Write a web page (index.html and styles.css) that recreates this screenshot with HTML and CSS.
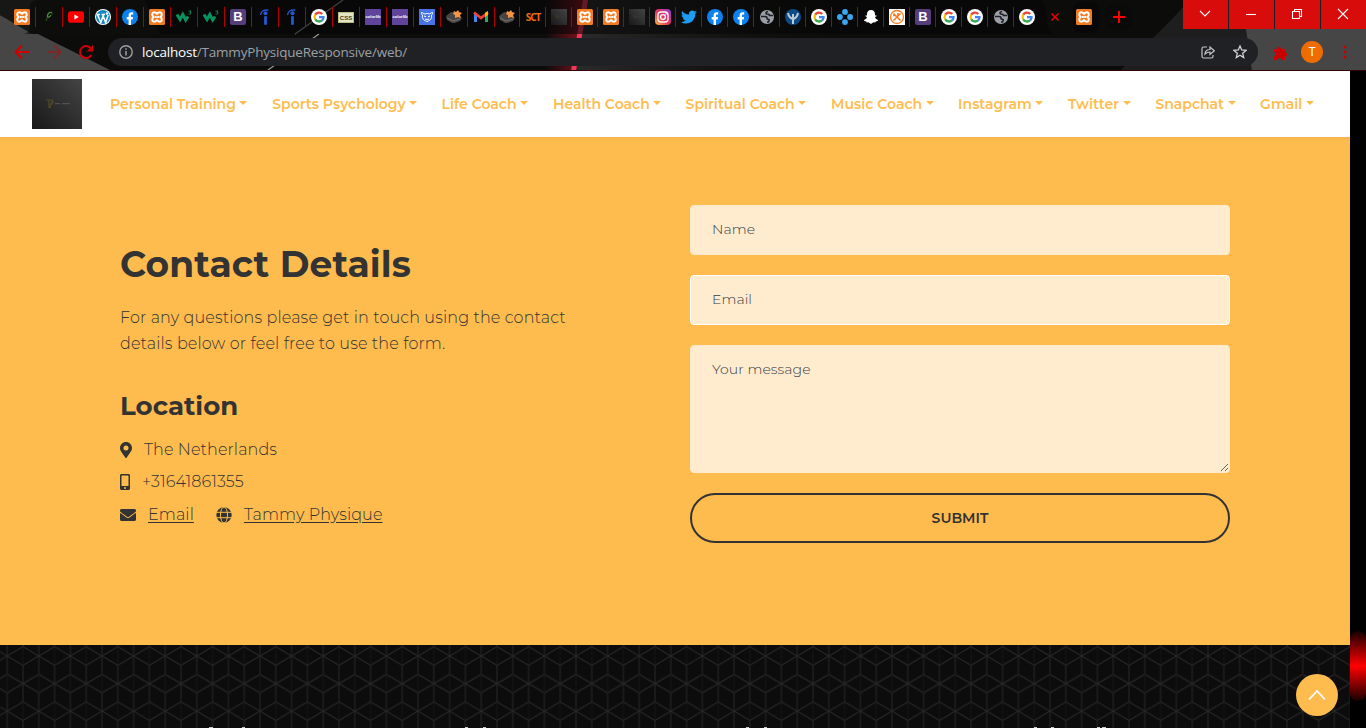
FILE: index.html
```html
<!DOCTYPE html>
<html lang="en">
<head>
<meta charset="utf-8">
<title>Tammy Physique</title>
<link rel="stylesheet" href="styles.css">
</head>
<body>
<svg class="defs" width="0" height="0">
  <symbol id="xampp" viewBox="0 0 16 16"><rect width="16" height="16" rx="1.5" fill="#f37b22"/><path d="M5 3.300C3 3.300 2.500 6.300 4.500 8 2.500 9.700 3 12.700 5 12.700q1.500 0 3-1.500 1.500 1.500 3 1.500c2 0 2.500-3 .5-4.700 2-1.700 1.500-4.700-.5-4.700q-1.500 0-3 1.500-1.500-1.500-3-1.500z" fill="none" stroke="#fff" stroke-width="2"/><path d="M6.500 7v2M9.500 7v2M6.500 8h3" stroke="#fff" stroke-width="1.300"/></symbol>
  <symbol id="leaf" viewBox="0 0 16 16"><path d="M11 3.500C8 3 6 5 6.500 8c1 .5 2.500 0 3.500-2" fill="none" stroke="#4a8f35" stroke-width="1.300"/><path d="M6.500 8L5 12M11 3.500v2" fill="none" stroke="#2c5a22"/></symbol>
  <symbol id="youtube" viewBox="0 0 16 16"><rect y="2.300" width="16" height="11.400" rx="2.800" fill="#f00"/><path d="M6.400 5.500v5L10.700 8z" fill="#fff"/></symbol>
  <symbol id="wordpress" viewBox="0 0 16 16"><circle cx="8" cy="8" r="8" fill="#fff"/><circle cx="8" cy="8" r="7" fill="#1688be"/><path d="M2.500 5.500l3.300 8 2.300-6.500 2.600 6.500 2.500-7.500M2 5.500h3M6.500 5.500h3.500" fill="none" stroke="#fff" stroke-width="1.500"/><circle cx="12" cy="4.500" r="1.200" fill="#fff"/></symbol>
  <symbol id="facebook" viewBox="0 0 16 16"><circle cx="8" cy="8" r="8" fill="#0c82f0"/><path d="M6.600 16v-5.500H4.700V8h1.900V6.400c0-2.100 1.200-3.200 3-3.200l1.600.1v2.100h-1c-1 0-1.200.5-1.200 1.200V8h2.100l-.4 2.500H9V16z" fill="#fff"/></symbol>
  <symbol id="w3" viewBox="0 0 16 16"><path d="M1 5.500l3 5 2.800-5L9.700 11l2.300-3.500" fill="none" stroke="#07925e" stroke-width="3"/><path d="M12.500 2H15l-1 1.300q1.500.2.700 1.500-1.200.7-2.200 0" fill="none" stroke="#07925e" stroke-width=".9"/></symbol>
  <symbol id="indeed" viewBox="0 0 16 16"><circle cx="8.500" cy="4.200" r="2" fill="#2557d6"/><rect x="7.100" y="7" width="2.800" height="9" rx="1.200" fill="#2557d6"/><path d="M3.500 6Q4.500 0 11.500 1.200" fill="none" stroke="#2557d6" stroke-width="1.300"/></symbol>
  <symbol id="google" viewBox="0 0 16 16"><circle cx="8" cy="8" r="8" fill="#fff"/><g fill="none" stroke-width="2.300"><path d="M4.200 5.700A4.400 4.400 0 0 1 11.200 5" stroke="#ea4335"/><path d="M4.200 10.200a4.500 4.500 0 0 1 0-4.500" stroke="#fbbc05"/><path d="M4.200 10.200a4.400 4.400 0 0 0 6.800 1.200" stroke="#34a853"/><path d="M8 8.200h4.500q0 2-1.500 3.200" stroke="#4285f4"/></g></symbol>
  <symbol id="bear" viewBox="0 0 16 16"><rect width="16" height="16" fill="#4773e4"/><path d="M2.500 3.500q2 0 2.500 1.500 3-1 6 0 .5-1.500 2.500-1.500.3 2-1 2.500 1 5-4.500 6.500Q2.500 11 3.500 6q-1.200-.5-1-2.500z" fill="none" stroke="#fff" stroke-width=".9"/><path d="M5 7l2 .8M11 7l-2 .8M6 10q2 1 4 0" fill="none" stroke="#fff"/></symbol>
  <symbol id="plugin" viewBox="0 0 16 16"><path d="M0 7l5-4 5 1 6 5-2 3-5 2H6l-5-3z" fill="#474543"/><path d="M1 9l6 3 7-2" fill="none" stroke="#77736c"/><path d="M8 2l2 1 2-2 1 2 3 1-2 2 1 3-3-1-3 1V6L7 5z" fill="#f79444"/></symbol>
  <symbol id="gmail" viewBox="0 0 16 16"><path d="M1 4v9h3V7z" fill="#4285f4"/><path d="M15 4v9h-3V7z" fill="#34a853"/><path d="M1 3.500L8 9l7-5.500" fill="none" stroke="#ea4335" stroke-width="2.700"/><path d="M12 3.700L15 2v4l-3 2z" fill="#fbbc04"/></symbol>
  <symbol id="logo" viewBox="0 0 50 50"><rect width="50" height="50" fill="url(#logo-shade)"/><path d="M14 21h7M17 21v8M18 29q1-7 3-7 1 3-3 4" fill="none" stroke="#504d24" stroke-width="1.100"/><path d="M23 24.700h5M30 24.700h8" stroke="#505050" stroke-width="1.200"/></symbol>
  <symbol id="instagram" viewBox="0 0 16 16"><rect width="16" height="16" rx="4" fill="url(#insta-shade)"/><rect x="3" y="3" width="10" height="10" rx="3" fill="none" stroke="#fff" stroke-width="1.300"/><circle cx="8" cy="8" r="2.400" fill="none" stroke="#fff" stroke-width="1.300"/><circle cx="11" cy="5" r=".7" fill="#fff"/></symbol>
  <symbol id="twitter" viewBox="0 0 16 16"><path d="M5 14.500c6 0 9.300-5 9.300-9.300v-.4L16 3l-1.900.5 1.400-1.800-2 .8A3.300 3.300 0 0 0 7.900 5.500C5 5.400 2.700 4 1.100 2c-.9 1.500-.4 3.400 1 4.400L.6 6c0 1.600 1.100 2.900 2.600 3.200l-1.400.1c.4 1.300 1.600 2.200 3 2.300A6.600 6.600 0 0 1 0 13c1.500 1 3.200 1.500 5 1.500z" fill="#1d9bf0"/></symbol>
  <symbol id="globe" viewBox="0 0 16 16"><circle cx="8" cy="8" r="7" fill="#9aa0a6"/><path d="M2 7.500h4q2 0 2 1.500t1.500 1.200Q11 10.500 9.500 13H8M9 2.500Q6 3 7.500 5q3 0 3 1.500H14" fill="none" stroke="#202124" stroke-width="1.600"/></symbol>
  <symbol id="psi" viewBox="0 0 16 16"><circle cx="8" cy="8" r="8" fill="#0d4a86"/><path d="M3 4q1 5 5 6 4-1 5-6M8 5v10" fill="none" stroke="#b9c9d7" stroke-width="2"/></symbol>
  <symbol id="dots" viewBox="0 0 16 16"><g fill="#37a8f4"><circle cx="8" cy="2.900" r="2.900"/><circle cx="2.900" cy="8" r="2.900"/><circle cx="13.100" cy="8" r="2.900"/><circle cx="8" cy="13.100" r="2.900"/></g></symbol>
  <symbol id="snapchat" viewBox="0 0 16 16"><path d="M8 1C5.300 1 4 2.800 4 5v1.500l-1.300-.2-.3 1 1.600.8c-.5 1.700-1.800 2.600-3 3l.3.900 2 .5.300 1 2-.2L8 15l2.400-1.700 2 .2.300-1 2-.5.300-.9c-1.200-.4-2.500-1.300-3-3l1.600-.8-.3-1-1.300.2V5c0-2.200-1.300-4-4-4z" fill="#fff"/></symbol>
  <symbol id="tools" viewBox="0 0 16 16"><rect width="16" height="16" fill="#fff"/><circle cx="8" cy="8" r="6.500" fill="none" stroke="#f37b22" stroke-width="1.300"/><path d="M4.500 4.500l7 7M11.500 4.500l-7 7M4 6.500h3M9 4v3" fill="none" stroke="#f37b22" stroke-width="1.700"/></symbol>
  <linearGradient id="logo-shade" x1="0" y1="1" x2="1" y2="0"><stop stop-color="#181818"/><stop offset="1" stop-color="#444"/></linearGradient>
  <linearGradient id="insta-shade" x1="0" y1="1" x2="1" y2="0"><stop stop-color="#fdb743"/><stop offset=".45" stop-color="#ee3556"/><stop offset="1" stop-color="#8b3dd0"/></linearGradient>
</svg>

<header class="browser">
  <svg class="theme" viewBox="0 0 1366 71" aria-hidden="true">
    <defs><linearGradient id="beam"><stop stop-color="#80101c" stop-opacity="0"/><stop offset="1" stop-color="#9e1020"/></linearGradient>
    <linearGradient id="haze"><stop stop-color="#333" stop-opacity=".8"/><stop offset="1" stop-color="#111" stop-opacity="0"/></linearGradient></defs>
    <rect width="1366" height="71" fill="#0c0c0b"/>
    <path d="M586 0h260v71H576z" fill="url(#haze)"/>
    <path d="M545 0h43l-12 71h-31z" fill="url(#beam)"/>
    <path d="M583 0h5l-12 71h-5z" fill="#ee3858"/>
    <path d="M0 15l110 55H0z" fill="#464646"/>
    <path d="M0 0h145l15 34H32L0 15z" fill="#171716"/>
    <path d="M343 0L295 34M319 34L268 70" stroke="#999" stroke-width="1.200"/>
    <path d="M1120 71l50-50L1190 0h176v71z" fill="#1e1e1e"/>
    <path d="M1246 29h120v42h-114z" fill="#464646"/>
    <path d="M30 5q2-5 8-5h1000q6 0 7 8l3 18q1 8 8 8H23q7 0 7-8z" fill="#060606" fill-opacity=".6"/>
    <rect x="1073" y="2" width="26" height="31" rx="8" fill="#080808"/>
  </svg>
  <div class="tabbar">
    <div class="tabs wide">
      <span class="tab"><svg><use href="#xampp"/></svg></span><span class="tab"><svg><use href="#leaf"/></svg></span><span class="tab"><svg><use href="#youtube"/></svg></span><span class="tab"><svg><use href="#wordpress"/></svg></span><span class="tab"><svg><use href="#facebook"/></svg></span><span class="tab"><svg><use href="#xampp"/></svg></span><span class="tab"><svg><use href="#w3"/></svg></span><span class="tab"><svg><use href="#w3"/></svg></span><span class="tab"><i class="fav bootstrap">B</i></span><span class="tab"><svg><use href="#indeed"/></svg></span><span class="tab"><svg><use href="#indeed"/></svg></span><span class="tab"><svg><use href="#google"/></svg></span><span class="tab"><i class="fav css">CSS</i></span><span class="tab"><i class="fav colorlib">colorlib</i></span><span class="tab"><i class="fav colorlib">colorlib</i></span><span class="tab"><svg><use href="#bear"/></svg></span><span class="tab"><svg><use href="#plugin"/></svg></span><span class="tab"><svg><use href="#gmail"/></svg></span>
    </div>
    <div class="tabs">
      <span class="tab"><svg><use href="#plugin"/></svg></span><span class="tab"><i class="fav sct">SCT</i></span><span class="tab"><svg><use href="#logo"/></svg></span><span class="tab"><svg><use href="#xampp"/></svg></span><span class="tab"><svg><use href="#xampp"/></svg></span><span class="tab"><svg><use href="#logo"/></svg></span><span class="tab"><svg><use href="#instagram"/></svg></span><span class="tab"><svg><use href="#twitter"/></svg></span><span class="tab"><svg><use href="#facebook"/></svg></span><span class="tab"><svg><use href="#facebook"/></svg></span><span class="tab"><svg><use href="#globe"/></svg></span><span class="tab"><svg><use href="#psi"/></svg></span><span class="tab"><svg><use href="#google"/></svg></span><span class="tab"><svg><use href="#dots"/></svg></span><span class="tab"><svg><use href="#snapchat"/></svg></span><span class="tab"><svg><use href="#tools"/></svg></span><span class="tab"><i class="fav bootstrap">B</i></span><span class="tab"><svg><use href="#google"/></svg></span><span class="tab"><svg><use href="#google"/></svg></span><span class="tab"><svg><use href="#globe"/></svg></span><span class="tab last"><svg><use href="#google"/></svg></span>
    </div>
    <svg class="tab-close" viewBox="0 0 8 8"><path d="M.5.5l7 7M7.500.5l-7 7" stroke="#f00000" stroke-width="1.500"/></svg>
    <svg class="favicon-end"><use href="#xampp"/></svg>
    <span class="new-tab"><svg width="12" height="12" viewBox="0 0 12 12"><path d="M6 0v12M0 6h12" stroke="#f00" stroke-width="2"/></svg></span>
    <div class="window-buttons">
      <span><svg width="12" height="12" viewBox="0 0 12 12"><path d="M1 3l5 5 5-5"/></svg></span>
      <span><svg width="12" height="12" viewBox="0 0 12 12"><path d="M1 6.500h10"/></svg></span>
      <span><svg width="12" height="12" viewBox="0 0 12 12"><path d="M1.500 3.500h7v7h-7zM3.500 3.500v-2h7v7h-2"/></svg></span>
      <span><svg width="12" height="12" viewBox="0 0 12 12"><path d="M1 1l10 10M11 1L1 11"/></svg></span>
    </div>
  </div>
  <div class="toolbar">
    <svg width="16" height="16" viewBox="0 0 16 16" class="tool"><path d="M15 8H2M8 1.500L1.500 8 8 14.500"/></svg>
    <svg width="16" height="16" viewBox="0 0 16 16" class="tool dim"><path d="M1 8h13M8 1.500L14.500 8 8 14.500"/></svg>
    <svg width="16" height="16" viewBox="0 0 16 16" class="tool"><path d="M13.300 11A6 6 0 1 1 12.500 4L14 6"/><path d="M15 1v6.500H8.500z" class="solid"/></svg>
    <div class="address">
      <svg width="14" height="14" viewBox="0 0 14 14"><circle cx="7" cy="7" r="6.200" fill="none" stroke="#9aa0a6" stroke-width="1.400"/><path d="M7 6v4.500M7 3.300v1.500" stroke="#9aa0a6" stroke-width="1.500"/></svg>
      <span class="url"><b>localhost</b>/TammyPhysiqueResponsive/web/</span>
      <svg class="share" width="14" height="14" viewBox="0 0 14 14"><path d="M6 2H2.500Q1 2 1 3.500v8Q1 13 2.500 13h8q1.500 0 1.500-1.500V10M4 9q.5-4.500 5-4.500V2L13.300 5.800 9 9.500V7Q6 7 4 9z" fill="none" stroke="#c3c5c8" stroke-width="1.200"/></svg>
      <svg width="14" height="14" viewBox="0 0 14 14"><path d="M7 1l1.700 4 4.300.4-3.300 2.900 1 4.300L7 10.300l-3.700 2.300 1-4.300L1 5.400 5.300 5z" fill="none" stroke="#d0d2d5" stroke-width="1.300"/></svg>
    </div>
    <svg class="puzzle" width="15" height="15" viewBox="0 0 15 15"><path d="M1 4h3a2 2 0 1 1 4 0h4v3.500a2 2 0 1 1 0 4V15H8.500a2 2 0 0 0-4 0H1v-4a2 2 0 0 0 0-4z" fill="#c90000"/></svg>
    <span class="avatar">T</span>
    <svg class="menu" width="4" height="14" viewBox="0 0 4 14" fill="#c90000"><circle cx="2" cy="2" r="1.500"/><circle cx="2" cy="7" r="1.500"/><circle cx="2" cy="12" r="1.500"/></svg>
  </div>
</header>

<div class="viewport">
  <div class="page">
    <nav class="site-nav">
      <svg class="brand"><use href="#logo"/></svg>
      <div class="links">
        <a>Personal Training</a><a>Sports Psychology</a><a>Life Coach</a><a>Health Coach</a><a>Spiritual Coach</a><a>Music Coach</a><a>Instagram</a><a>Twitter</a><a>Snapchat</a><a>Gmail</a>
      </div>
    </nav>
    <main class="contact">
      <section class="details">
        <h1>Contact Details</h1>
        <p class="intro">For any questions please get in touch using the contact<br>details below or feel free to use the form.</p>
        <h2>Location</h2>
        <p class="row"><svg width="12" height="16" viewBox="0 0 384 512"><path d="M172.300 501.700C27 291 0 269.400 0 192 0 86 86 0 192 0s192 86 192 192c0 77.400-27 99-172.300 309.700a24 24 0 0 1-39.400 0zM192 272a80 80 0 1 0 0-160 80 80 0 0 0 0 160z"/></svg><span>The Netherlands</span></p>
        <p class="row"><svg width="10" height="16" viewBox="0 0 320 512"><path fill-rule="evenodd" d="M272 0H48C21.500 0 0 21.500 0 48v416c0 26.500 21.500 48 48 48h224c26.500 0 48-21.500 48-48V48c0-26.500-21.500-48-48-48zM160 480a32 32 0 1 1 0-64 32 32 0 0 1 0 64zm112-108q0 12-12 12H60q-12 0-12-12V60q0-12 12-12h200q12 0 12 12z"/></svg><span>+31641861355</span></p>
        <p class="row"><svg width="16" height="16" viewBox="0 0 512 512"><path d="M502 191c4-3 10 0 10 5v204c0 26-22 48-48 48H48c-26 0-48-22-48-48V196c0-5 6-8 10-5 22 17 52 40 155 114 21 16 57 48 91 48s71-33 91-48c103-74 133-97 155-114zM256 320c23 0 57-29 74-42 132-96 143-104 174-129 5-4 8-11 8-18v-19c0-26-22-48-48-48H48c-26 0-48 22-48 48v19c0 7 3 14 8 18 31 25 42 33 174 129 17 13 51 42 74 42z"/></svg><a>Email</a>
        <svg class="web" width="16" height="16" viewBox="0 0 16 16"><circle cx="8" cy="8" r="7.700"/><path d="M0 5.300h16M0 10.700h16" stroke="#ffbc4e" fill="none"/><ellipse cx="8" cy="8" rx="3.500" ry="8" stroke="#ffbc4e" fill="none"/></svg><a>Tammy Physique</a></p>
      </section>
      <form class="form">
        <input class="field" placeholder="Name" aria-label="Name">
        <input class="field hovered" placeholder="Email" aria-label="Email">
        <textarea class="field message" placeholder="Your message" aria-label="Your message"></textarea>
        <button type="button">SUBMIT</button>
      </form>
    </main>
    <footer class="footer">
      <svg width="1350" height="83"><defs><pattern id="cubes" x="7.200" y="11" width="31.600" height="55.200" patternUnits="userSpaceOnUse"><g fill="none" stroke="#2b2b2b" stroke-width="1"><path d="M0 0l15.800-9.200L31.600 0 15.800 9.200zM0 55.200L15.800 46l15.800 9.200-15.800 9.200zM-15.800 27.600L0 18.400l15.800 9.200L0 36.800zM15.800 27.600l15.800-9.200 15.800 9.200-15.800 9.200z"/><path d="M15.800 9.200V46M0 0v18.400M0 36.800v18.400M31.600 0v18.400M31.600 36.800v18.400" stroke="#262626"/><path d="M0 18v19M31.600 18v19M15.800 0v9M15.800 46v9" stroke="#151515"/></g></pattern></defs><rect width="1350" height="83" fill="#0c0c0c"/><rect width="1350" height="83" fill="url(#cubes)"/></svg>
      <svg class="ascenders" width="1350" height="1" fill="#c9c9c9"><path d="M209 0h4v1h-4zM242 0h3v1h-3zM465 0h3v1h-3zM483 0h3v1h-3zM746 0h3v1h-3zM764 0h3v1h-3zM1034 0h3v1h-3zM1051 0h3v1h-3zM1097 0h3v1h-3zM1102 0h4v1h-4z"/></svg>
    </footer>
  </div>
  <div class="scrollbar"><span class="thumb"></span></div>
  <a class="to-top"><svg width="18" height="12" viewBox="0 0 18 12"><path d="M1 10.500l8-8.500 8 8.500" fill="none" stroke="#fff" stroke-width="1.800"/></svg></a>
</div>
</body>
</html>
```

FILE: styles.css
```css
* { box-sizing: border-box; }
body { margin: 0; width: 1366px; height: 728px; overflow: hidden; background: #000; font-family: Montserrat, Inter, "Liberation Sans", sans-serif; color: #333; }
.defs { position: absolute; }
svg { flex: none; }

.browser { position: relative; height: 71px; border-bottom: 1px solid #300006; overflow: hidden; }
.theme { position: absolute; inset: 0; width: 1366px; height: 71px; }
.tabbar { position: relative; display: flex; height: 34px; padding-left: 9px; align-items: center; }
.tabs { display: flex; height: 34px; }
.tabs + .tabs { margin-left: -1px; }
.tab { width: 26px; height: 34px; padding: 9px 5px 0; background: linear-gradient(#b00000, #b00000) 100% 7px / 1px 20px no-repeat; }
.wide .tab { width: 27px; }
.tab.last { background: none; }
.tab svg, .favicon-end { display: block; width: 16px; height: 16px; }
.fav { display: flex; align-items: center; justify-content: center; width: 16px; height: 16px; font: 700 13px/16px "Liberation Sans", sans-serif; color: #fff; }
.fav.bootstrap { border-radius: 2px; background: #563d7c; }
.fav.css { height: 11px; margin-top: 3px; border: 1px solid #b9bd83; background: #e3e4c3; font-size: 6px; color: #3d402b; }
.fav.colorlib { background: #60439a; font-size: 4.200px; }
.fav.sct { font: 700 10px/16px "Open Sans", sans-serif; letter-spacing: -1px; color: #f46b0b; }
.tab-close { width: 8px; height: 8px; margin-left: 11px; }
.favicon-end { margin-left: 17px; }
.new-tab { display: flex; align-items: center; justify-content: center; width: 28px; height: 28px; margin-left: 13px; border-radius: 50%; background: #0a0a0a; }
.window-buttons { display: flex; gap: 1px; margin-left: auto; align-self: flex-start; }
.window-buttons span { display: flex; align-items: center; justify-content: center; width: 45px; height: 29px; padding: 0 2px 1px 0; background: #d90c0c; }
.window-buttons path { fill: none; stroke: #fff; stroke-width: 1.1; }
.toolbar { position: relative; display: flex; align-items: center; height: 36px; padding: 0 19px 0 14px; }
.tool { margin-right: 16px; fill: none; stroke: #d00000; stroke-width: 2; }
.tool .solid { fill: #d00000; stroke: none; }
.tool.dim { opacity: .4; }
.address { display: flex; align-items: center; width: 1150px; height: 28px; margin-left: -2px; padding: 0 11px; border-radius: 14px; background: #202124; }
.url { margin-left: 9px; font: 13.500px/20px "Open Sans", "Noto Sans", sans-serif; letter-spacing: -.2px; color: #9aa0a6; }
.url b { font-weight: 400; color: #fff; }
.share { margin-left: auto; margin-right: 18px; }
.puzzle { margin-left: 15px; }
.avatar { width: 22px; height: 22px; margin: 0 20px 0 13px; border-radius: 50%; background: #ef6c00; color: #fff; font: 12px/22px Roboto, sans-serif; text-align: center; }

.viewport { position: relative; display: flex; height: 657px; }
.page { width: 1350px; }
.site-nav { display: flex; align-items: center; height: 66px; padding-left: 32px; background: #fff; }
.brand { width: 50px; height: 50px; }
.links { display: grid; grid-template-columns: 162.300px 169.300px 111.500px 132.500px 145.500px 127px 110px 87.300px 104.700px 60px; margin-left: 28px; }
.links a { font-size: 14px; line-height: 20px; font-weight: 600; color: #ffbc4e; white-space: nowrap; }
.links a::after { content: ""; display: inline-block; margin-left: 3.600px; vertical-align: 4px; border: 4px solid transparent; border-top-color: #ffbc4e; border-bottom: 0; }

.contact { display: flex; height: 508px; background: #ffbc4e; box-shadow: inset 0 3px 3px -2px #f0b04c; }
.details { width: 570px; margin-left: 120px; padding-top: 104px; }
h1 { margin: 0; font-size: 36px; line-height: 46px; font-weight: 700; letter-spacing: .13px; white-space: nowrap; }
.intro { margin: 18px 0 31px; font-size: 16px; line-height: 26px; font-weight: 300; letter-spacing: .13px; white-space: nowrap; }
h2 { margin: 0 0 12px; font-size: 26px; line-height: 37px; font-weight: 700; }
.row { display: flex; align-items: center; gap: 12px; margin: 0 0 6.400px; font-size: 16px; line-height: 26px; font-weight: 300; letter-spacing: .1px; fill: #333; }
.row a { text-decoration: underline; text-underline-offset: 2px; }
.web { margin-left: 10px; }
.form { display: flex; flex-direction: column; gap: 20px; width: 540px; padding-top: 68px; }
.field { width: 540px; height: 50px; padding: 0 21px 2px; border: 1px solid #ffebce; border-radius: 4px; outline: 0; background: #ffebce; font: 300 14px/24px Montserrat, Inter, sans-serif; letter-spacing: .07px; color: #333; }
.field::placeholder { color: #363c42; opacity: 1; }
.hovered { border-color: #fff; }
.message { height: 128px; padding-top: 11px; resize: vertical; }
button { height: 50px; border: 2px solid #333; border-radius: 25px; background: none; font: 600 14px Montserrat, Inter, sans-serif; color: #333; }
.footer { position: relative; height: 83px; background: #0c0c0c; }
.footer svg { display: block; }
.footer .ascenders { position: absolute; left: 0; bottom: 0; }
.scrollbar { width: 16px; padding-top: 560px; background: #000; }
.thumb { display: block; height: 70px; border-radius: 8px; background: linear-gradient(#160000, #f00 50%, #160000); }
.to-top { position: absolute; right: 28px; bottom: 12px; display: flex; align-items: center; justify-content: center; width: 42px; height: 42px; border-radius: 50%; background: #ffbc4e; }
```
